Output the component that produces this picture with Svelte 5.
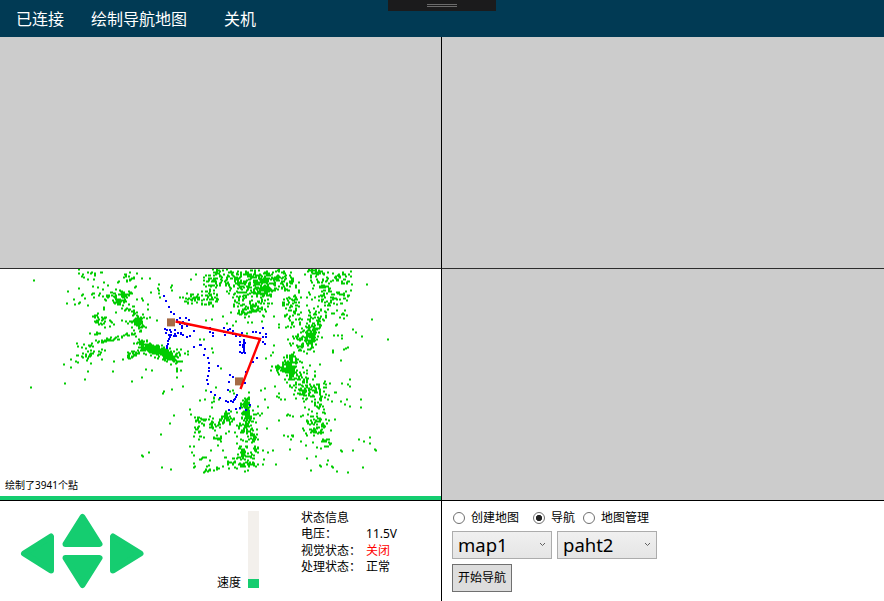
<script>
  // Dense scan areas: centre x, centre y, spread x, spread y, points, tilt
  const clusters = [
    [94,273,7,2.5,14,0],[129,279,7,5,22,0],[104,296,8,1.5,14,.15],[121,298,4.5,3,50,0],[122,298,11,6,35,0],
    [131,311,5,1,10,.2],[138,322,3,3.5,60,0],[138,322,7,5,12,0],[102,319,5,2.5,22,0],[112,322,9,3,12,0],
    [97,333,3,1.5,6,0],[132,334,4,1.2,12,-.1],[104,341,4.5,1,20,-.1],[119,338,5,1,12,-.2],[89,346,4,1.5,10,0],
    [86,356,5,2,18,-.2],[100,352,6,1.5,9,-.4],[132,355,5,2,28,-.4],[145,346,4,2.5,45,.2],[155,350,7,2.6,130,.25],
    [167,355,6,2.7,110,.45],[178,362,1.3,6,12,0],
    [194,298,5,2.3,35,0],[210,301,3,4,25,0],[212,286,4,7,48,0],[222,274,5,5,30,0],[235,280,7,8,60,0],
    [248,285,8,7,80,0],[265,288,4,4.5,80,0],[262,281,12,7,115,0],[280,276,6,5,40,0],[286,284,5,4,18,0],
    [240,300,4,7,35,0],[250,310,6,2.2,60,-.4],[262,297,6,7,28,0],
    [313,271,4,2.5,32,0],[322,280,6,7,52,0],[342,278,4,3,28,0],[330,300,9,9,70,0],[293,298,5,7,30,0],
    [293,312,6,8,44,0],[345,295,3,6,12,0],[315,323,5,7,48,0],[311,339,2.5,5,65,0],[305,337,6,6,55,0],
    [298,346,4,3,20,0],[291,359,4,4,40,0],[290,368,3,5,75,0],[281,369,4,2.5,28,0],[299,374,6,4,38,0],
    [296,382,4,3,22,0],[306,390,5,4,42,0],[317,391,5,4,28,0],[318,403,5,6,30,0],[318,422,6,5,42,0],
    [312,431,3,2,22,0],[324,426,3,6,16,0],[293,437,3,1,6,.3],[327,442,2.5,2.5,12,0],
    [226,417,3,2.5,38,0],[214,425,3,2.5,25,0],[201,419,4,3,20,0],[198,433,2.5,4,18,0],[246,407,2.8,6,60,0],
    [246,430,4,4,40,0],[250,419,4,3,22,0],[240,420,10,7,22,0],[218,440,3,2,12,0],[253,438,3,3,15,0],
    [240,452,3,4,20,0],[248,455,5,6,38,0],[233,463,3,4,18,0],[242,465,4,3,12,0],[252,464,5,1,8,0],
    [259,450,3,1.5,10,0],[209,470,2,1.5,10,0],[204,463,4,3,7,0],[218,468,2,1,4,0],[213,400,3,4,6,0]
  ];

  const strays = [
    34,280,79,273,79,288,68,291,74,299,67,303,80,302,82,295,88,305,104,309,88,279,94,279,83,294,85,298,75,304,79,303,
    104,282,108,285,93,286,98,287,103,289,77,343,82,347,64,364,71,359,71,367,76,361,78,362,88,371,85,379,113,371,
    132,381,142,377,146,369,65,383,31,387,91,363,102,359,114,361,148,304,148,309,134,343,
    150,278,159,284,158,288,159,290,159,293,160,297,172,285,171,287,172,290,180,297,183,297,191,279,196,274,163,393,164,391,
    200,400,172,389,183,386,185,353,188,351,188,354,152,370,177,371,177,377,200,339,204,339,212,348,213,352,205,399,230,391,
    271,355,266,358,273,352,274,345,248,398,261,390,265,399,275,386,279,393,221,368,219,399,234,393,206,320,212,319,223,316,
    227,323,233,325,236,321,247,333,248,322,264,316,262,309,274,316,279,324,262,321,252,322,
    367,284,352,284,351,290,351,271,372,319,353,329,356,332,362,336,388,339,341,360,342,383,348,384,350,379,350,386,335,392,
    341,401,347,399,361,399,332,401,344,349,346,348,348,347,333,352,333,350,342,338,338,335,334,335,342,335,344,318,340,317,
    337,324,336,325,320,364,330,383,325,381,324,383,277,396,279,397,281,399,285,399,279,327,
    174,415,170,423,161,434,149,452,142,455,143,456,162,467,171,469,200,400,206,390,216,387,233,390,265,388,277,396,
    258,406,268,407,262,413,279,420,267,428,276,464,273,450,268,452,264,459,190,409,191,414,190,446,192,452,194,446,
    194,455,194,463,194,467,223,450,211,450,201,459,204,457,210,460,336,392,361,407,347,399,350,406,345,404,341,401,
    284,435,290,449,273,450,311,470,307,458,316,456,328,460,327,464,320,465,321,466,332,466,333,467,337,471,348,472,363,467,
    359,439,364,441,370,437,370,443,375,449,376,450,353,450,341,450,342,451,288,414,287,415,290,415,293,416,301,416,317,447,
    321,448,306,445,301,441,313,442
  ];

  // Driven route, offsets from (150, 265) at three steps per pixel
  const track = [
    41,94,47,109,56,127,62,142,72,147,90,160,108,160,81,166,99,170,117,164,104,176,96,182,111,183,122,180,89,178,96,190,
    44,192,52,196,60,196,48,204,74,196,64,202,74,206,71,212,77,214,84,203,94,204,92,208,100,210,110,216,121,213,133,198,
    132,247,151,240,154,240,63,210,60,217,56,222,54,228,54,236,51,242,50,250,56,210,165,252,163,269,174,278,177,295,177,310,
    204,304,176,319,174,333,171,346,174,358,183,382,195,391,210,400,228,409,234,412,249,411,252,405,258,397,262,390,240,331,
    249,337,237,350,234,376,180,190,181,202,189,203,189,214,223,190,222,200,224,209,235,196,240,192,248,198,250,208,258,214,
    270,214,283,212,276,203,309,202,318,202,330,204,339,190,348,206,348,217,339,217,346,236,330,224,339,232,321,278,309,290,
    285,354,288,322,270,232,270,241,283,225,283,231,283,237,283,243,283,249,283,255,283,261,284,265,271,262,276,264,279,240,
    279,246,286,234,255,403,243,408,300,419,270,428,258,433,288,435,237,434
  ];

  let seed = 3941;
  function random() {
    seed = (Math.imul(seed, 1664525) + 1013904223) >>> 0;
    return seed / 4294967296;
  }
  function dot(x, y) {
    return `M${Math.round(x) - 1} ${y}h2v2h-2z`;
  }

  let green = '';
  for (const [cx, cy, sx, sy, n, tilt] of clusters) {
    for (let i = 0; i < n; i++) {
      const r = Math.min(2.6, Math.sqrt(-2 * Math.log(1 - random()))) * 1.08;
      const a = random() * Math.PI * 2;
      const u = r * Math.cos(a) * sx;
      const v = r * Math.sin(a) * sy;
      const x = cx + u * Math.cos(tilt) - v * Math.sin(tilt);
      const y = cy + u * Math.sin(tilt) + v * Math.cos(tilt);
      if (y > 269.5 && y < 473) green += dot(x, Math.floor(y) - 0.5);
    }
  }
  for (let i = 0; i < strays.length; i += 2) green += dot(strays[i], strays[i + 1] - 0.5);

  let blue = '';
  for (let i = 0; i < track.length; i += 2) {
    blue += dot(150 + track[i] / 3, Math.round(265 + track[i + 1] / 3) - 1);
  }

  const status = [
    ['电压：', '11.5V', false],
    ['视觉状态：', '关闭', true],
    ['处理状态：', '正常', false]
  ];
  const modes = ['创建地图', '导航', '地图管理'];
  let mode = $state('导航');
</script>

<main>
  <header>
    <span class="link">已连接</span><span class="draw">绘制导航地图</span><span>关机</span>
    <div class="grip"><i></i><i></i></div>
  </header>

  <div class="grid">
    <section class="view"></section>
    <section class="view right"></section>
    <section class="view map">
      <svg class="cloud" viewBox="0 269 441 227" width="441" height="227">
        <path d={green} fill="#00cc00" />
        <path d={blue} fill="#0000f5" />
        <rect x="167" y="318.4" width="8" height="8" fill="#a56b46" />
        <rect x="235" y="377.4" width="8" height="8" fill="#a56b46" />
        <path d="M175.5 321.5L260 339L240.5 389" fill="none" stroke="#f00" stroke-width="2.4" />
      </svg>
      <span class="count">绘制了3941个點</span>
    </section>
    <section class="view right"></section>

    <section class="controls">
      <svg class="pad" viewBox="20 513 124 76" width="124" height="76">
        <g fill="#15cd70" stroke="#15cd70" stroke-width="6" stroke-linejoin="round">
          <path d="M82.5 517L99.5 544H65.5z" />
          <path d="M82.5 585L99.5 558H65.5z" />
          <path d="M24 553.5L51 536.5V570.5z" />
          <path d="M140.500 553.5L113 536.5V570.5z" />
        </g>
      </svg>
      <span class="speed">速度</span>
      <div class="meter"><i></i></div>
      <div class="status">
        <div>状态信息</div>
        {#each status as [name, value, alert]}
          <div class="entry"><span>{name}</span><b class:alert>{value}</b></div>
        {/each}
      </div>
    </section>

    <section class="nav">
      <div class="modes">
        {#each modes as name}
          <label><input type="radio" value={name} bind:group={mode} />{name}</label>
        {/each}
      </div>
      <div class="selects">
        {#each ['map1', 'paht2'] as name}
          <div class="select">
            <span>{name}</span>
            <svg width="7" height="5" viewBox="0 0 7 5"><path d="M1 1L3.500 3.500L6 1" fill="none" stroke="#606060" /></svg>
          </div>
        {/each}
      </div>
      <button>开始导航</button>
    </section>
  </div>
</main>

<style>
  main {
    width: 884px;
    height: 601px;
    overflow: hidden;
    background: #fff;
    color: #000;
    font: 12px/16px 'Noto Sans', 'Noto Sans CJK SC', sans-serif;
  }
  header {
    position: relative;
    display: flex;
    box-sizing: border-box;
    height: 37px;
    padding: 7px 16px 0;
    background: #013a54;
    color: #fff;
    font-size: 16px;
    line-height: 24px;
  }
  .link { margin-right: 27px; }
  .draw { margin-right: 37px; }
  .grip {
    position: absolute;
    left: 388px;
    top: 0;
    width: 108px;
    height: 11px;
    background: #1b1b1c;
  }
  .grip i {
    display: block;
    width: 30px;
    height: 1px;
    margin: 4px auto 0;
    background: #6b6b6b;
  }
  .grip i + i { margin-top: 1px; }
  .grid {
    display: grid;
    grid-template-columns: 442px 442px;
    grid-template-rows: 232px 232px 100px;
  }
  section {
    box-sizing: border-box;
    border-right: 1px solid #000;
    min-width: 0;
  }
  .view {
    background: #ccc;
    border-bottom: 1px solid #000;
  }
  .view:nth-child(-n + 2) { border-bottom-color: #2c2c2c; }
  .right, .nav { border-right: 0; }
  .map {
    position: relative;
    background: #fff;
    border-bottom: 1px solid #000;
    box-shadow: inset 0 -4px #15cd70;
  }
  .cloud { display: block; }
  .count {
    position: absolute;
    left: 5px;
    bottom: 7px;
    font-size: 10px;
    line-height: 16px;
  }
  .controls {
    display: flex;
    padding: 9px 0 0 20px;
    align-items: flex-start;
  }
  .pad { margin-top: 3px; }
  .speed { margin: 65px 7px 0 73px; }
  .meter {
    display: flex;
    align-items: flex-end;
    width: 11px;
    height: 77px;
    margin-top: 1px;
    background: #f3f0ec;
  }
  .meter i {
    width: 11px;
    height: 9px;
    background: #15cd70;
  }
  .status { margin-left: 42px; }
  .status > div { height: 16.300px; white-space: nowrap; }
  .entry { display: flex; }
  .entry span { width: 65px; }
  b { font-weight: 400; }
  .alert { color: #f00; }
  .nav { padding: 9px 0 0 10px; }
  .modes { display: flex; height: 21px; }
  label { display: flex; margin-right: 13px; }
  label + label { margin-right: 7px; }
  input {
    appearance: none;
    box-sizing: border-box;
    width: 12px;
    height: 12px;
    margin: 2px 6px 0 1px;
    border: 1px solid #707070;
    border-radius: 50%;
    background: #fff;
  }
  input:checked { background: radial-gradient(circle, #212121 2.800px, #fff 3.400px); }
  .selects { display: flex; gap: 5px; }
  .select {
    box-sizing: border-box;
    display: flex;
    align-items: center;
    justify-content: space-between;
    width: 100px;
    height: 28px;
    padding: 0 5px 1px 5px;
    border: 1px solid #acacac;
    background: linear-gradient(#f0f0f0, #e5e5e5);
    font-size: 18.5px;
    line-height: 26px;
  }
  button {
    display: block;
    width: 60px;
    height: 28px;
    margin-top: 5px;
    padding: 0;
    border: 1px solid #707070;
    border-radius: 0;
    background: #ddd;
    color: #000;
    font: inherit;
    line-height: 26px;
  }
</style>
